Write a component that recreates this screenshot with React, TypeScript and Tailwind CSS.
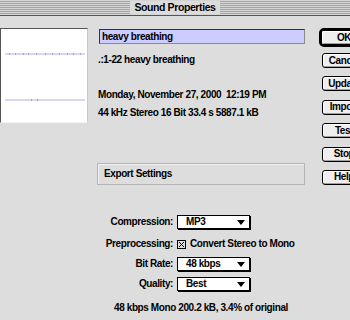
import React from 'react';

function PushButton({ label }: { label: string }) {
  return (
    <div className="flex h-[15px] w-[44px] items-center justify-center rounded-[3px] border border-black bg-[#eeeeee] shadow-[inset_-1px_-1px_0_#a0a0a0,inset_1px_1px_0_#ffffff]">
      {label}
    </div>
  );
}

function Popup({ value }: { value: string }) {
  return (
    <div className="flex h-[14px] w-[73px] items-center justify-between border border-black bg-white pl-[8px] pr-[4px] shadow-[1px_1px_0_#000]">
      <span>{value}</span>
      <svg width="8" height="5" viewBox="0 0 8 5">
        <path d="M0 0 L8 0 L4 5 Z" fill="#000" />
      </svg>
    </div>
  );
}

function Waveform() {
  const ticks = [8, 14, 22, 27, 35, 44, 51, 58, 66, 72, 79];
  return (
    <svg width="86" height="94" viewBox="0 0 86 94">
      <line x1="4" y1="25" x2="84" y2="25" stroke="#b0b0e6" strokeWidth="1" />
      <line x1="4" y1="71" x2="84" y2="71" stroke="#b0b0e6" strokeWidth="1" />
      {ticks.map((t) => (
        <rect key={t} x={t} y={24} width="1" height="2" fill="#a4a4dc" />
      ))}
      {[30, 36].map((t) => (
        <rect key={t} x={t} y={70} width="1" height="2" fill="#a4a4dc" />
      ))}
    </svg>
  );
}

function Row({ label, children }: { label: string; children: React.ReactNode }) {
  return (
    <div className="flex h-[16px] items-center">
      <div className="w-[76px] text-right">{label}</div>
      <div className="ml-[4px] flex items-center">{children}</div>
    </div>
  );
}

export default function App() {
  return (
    <div className="h-[320px] w-[350px] overflow-hidden bg-[#dddddd] font-['Liberation_Sans',Arial,sans-serif] text-[10px] font-bold leading-none tracking-[-0.4px] text-black">
      {/* title bar */}
      <div className="flex h-[16px] items-center justify-center border-b border-[#555] bg-[repeating-linear-gradient(to_bottom,#d4d4d4_0px,#d4d4d4_1px,#a6a6a6_1px,#a6a6a6_2px)]">
        <div className="flex h-[13px] items-center bg-[#dcdcdc] px-[4px] text-[10.5px]">
          Sound Properties
        </div>
      </div>

      <div className="flex">
        {/* waveform */}
        <div className="mt-[12px] h-[95px] w-[88px] border-l border-t border-b border-r border-[#555] border-b-[#f4f4f4] border-r-[#c8c8c8] bg-white">
          <Waveform />
        </div>

        {/* middle */}
        <div className="ml-[9px] flex w-[209px] flex-col">
          <div className="ml-[2px] mt-[13px] flex h-[15px] w-[206px] items-center border border-[#8a8a8a] border-l-[#333] border-t-[#333] bg-[#ccccff] px-[2px]">
            heavy breathing
          </div>
          <div className="ml-[1px] mt-[8px] flex h-[16px] items-center">.:1-22 heavy breathing</div>
          <div className="ml-[1px] mt-[19px] flex h-[16px] items-center">
            Monday, November 27, 2000&nbsp;&nbsp;12:19 PM
          </div>
          <div className="ml-[1px] mt-[2px] flex h-[16px] items-center">
            44 kHz Stereo 16 Bit 33.4 s 5887.1 kB
          </div>
          <div className="mt-[42px] flex h-[22px] items-center border border-[#b4b4b4] px-[6px] shadow-[inset_1px_1px_0_#f0f0f0]">
            Export Settings
          </div>

          <div className="mt-[29px]">
            <Row label="Compression:">
              <Popup value="MP3" />
            </Row>
          </div>
          <div className="mt-[6px]">
            <Row label="Preprocessing:">
              <div className="flex items-center">
                <svg width="9" height="9" viewBox="0 0 9 9">
                  <rect x="0.5" y="0.5" width="8" height="8" fill="none" stroke="#000" />
                  <path d="M2 2 L7 7 M7 2 L2 7" stroke="#000" strokeWidth="1" />
                </svg>
                <span className="ml-[4px]">Convert Stereo to Mono</span>
              </div>
            </Row>
          </div>
          <div className="mt-[4px]">
            <Row label="Bit Rate:">
              <Popup value="48 kbps" />
            </Row>
          </div>
          <div className="mt-[4px]">
            <Row label="Quality:">
              <Popup value="Best" />
            </Row>
          </div>
          <div className="mt-[8px] flex h-[16px] items-center justify-center">
            48 kbps Mono 200.2 kB, 3.4% of original
          </div>
        </div>

        {/* buttons */}
        <div className="ml-[14px] mt-[12px] flex w-[52px] shrink-0 flex-col">
          <div className="h-[19px] w-[50px] rounded-[5px] border-[3px] border-black">
            <div className="flex h-[13px] w-[44px] items-center justify-center rounded-[2px] bg-[#eeeeee] shadow-[inset_-1px_-1px_0_#a0a0a0,inset_1px_1px_0_#ffffff]">
              OK
            </div>
          </div>
          <div className="ml-[3px] mt-[6px] flex flex-col gap-[8.4px]">
            <PushButton label="Cancel" />
            <PushButton label="Update" />
            <PushButton label="Import" />
            <PushButton label="Test" />
            <PushButton label="Stop" />
            <PushButton label="Help" />
          </div>
        </div>
      </div>
    </div>
  );
}
